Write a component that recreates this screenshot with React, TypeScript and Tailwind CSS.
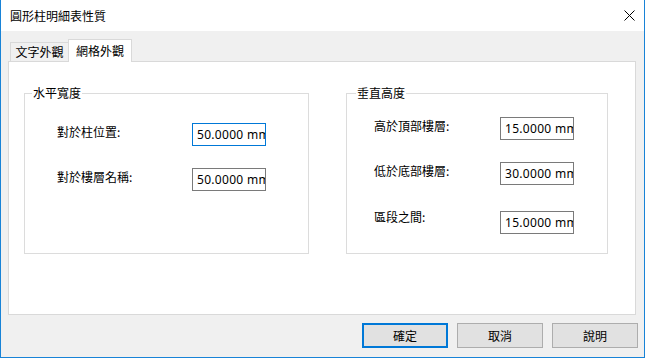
import React from "react";

const cjk = { fontFamily: '"Noto Sans CJK TC", "Noto Sans", sans-serif' };

function Field({ value, focused }: { value: string; focused?: boolean }) {
  return (
    <div
      className={`w-[74px] h-[23px] shrink-0 bg-white border ${
        focused ? "border-[#0078d7]" : "border-[#7a7a7a]"
      } flex items-center pl-[4px] overflow-hidden whitespace-nowrap text-[12px] tracking-[0.3px] text-black`}
      style={{ fontFamily: '"Noto Sans", "Liberation Sans", sans-serif' }}
    >
      <span className="shrink-0">{value}</span>
    </div>
  );
}

function Row({
  label,
  labelW,
  value,
  focused,
  mt,
  lift,
}: {
  label: string;
  labelW: string;
  value: string;
  focused?: boolean;
  mt: string;
  lift: string;
}) {
  return (
    <div className={`flex items-center ${mt}`}>
      <div className={`${labelW} ${lift} shrink-0 text-[12px] leading-[16px] text-black`}>{label}</div>
      <Field value={value} focused={focused} />
    </div>
  );
}

export default function App() {
  return (
    <div
      className="w-[645px] h-[358px] flex flex-col bg-[#f0f0f0] border-x border-b border-[#1883d7] overflow-hidden"
      style={cjk}
    >
      {/* Title bar */}
      <div className="h-[31px] shrink-0 bg-white flex items-center justify-between pl-[9px]">
        <span className="text-[12px] text-black leading-[16px]">圓形柱明細表性質</span>
        <svg width="11" height="11" viewBox="0 0 11 11" className="mr-[9px]">
          <path d="M0.5 0.5 L10.5 10.5 M10.5 0.5 L0.5 10.5" stroke="#000" strokeWidth="1" fill="none" />
        </svg>
      </div>

      {/* Tabs */}
      <div className="mt-[8px] h-[22px] ml-[9px] flex items-end shrink-0">
        <div className="w-[58px] h-[19px] border-l border-t border-[#d9d9d9] bg-[#f0f0f0] flex items-center justify-center text-[12px] text-black leading-[16px]">
          文字外觀
        </div>
        <div className="relative z-10 -mb-px w-[64px] h-[23px] border-l border-t border-r border-[#d9d9d9] bg-white flex items-center justify-center text-[12px] text-black leading-[16px] pb-[1px]">
          網格外觀
        </div>
      </div>

      {/* Panel */}
      <div className="ml-[7px] w-[628px] h-[254px] shrink-0 bg-white border border-[#d9d9d9] flex items-start pl-[15px] pt-[31px]">
        {/* Left group */}
        <div className="w-[285px] h-[161px] border border-[#dcdcdc] flex flex-col">
          <span className="-mt-[9px] ml-[7px] px-[1px] w-fit bg-white text-[12px] leading-[16px] text-black">
            水平寬度
          </span>
          <div className="pl-[32px] flex flex-col">
            <Row label="對於柱位置:" labelW="w-[135px]" value="50.0000 mm" focused mt="mt-[22px]" lift="mb-[5px]" />
            <Row label="對於樓層名稱:" labelW="w-[135px]" value="50.0000 mm" mt="mt-[22px]" lift="mb-[5px]" />
          </div>
        </div>

        {/* Right group */}
        <div className="ml-[37px] w-[262px] h-[161px] border border-[#dcdcdc] flex flex-col">
          <span className="-mt-[9px] ml-[9px] px-[1px] w-fit bg-white text-[12px] leading-[16px] text-black">
            垂直高度
          </span>
          <div className="pl-[27px] flex flex-col">
            <Row label="高於頂部樓層:" labelW="w-[126px]" value="15.0000 mm" mt="mt-[16px]" lift="mb-[5px]" />
            <Row label="低於底部樓層:" labelW="w-[126px]" value="30.0000 mm" mt="mt-[22px]" lift="mb-[5px]" />
            <Row label="區段之間:" labelW="w-[126px]" value="15.0000 mm" mt="mt-[24px]" lift="mb-[11px]" />
          </div>
        </div>
      </div>

      {/* Buttons */}
      <div className="mt-[8px] flex justify-end gap-[9px] pr-[6px] shrink-0">
        <button className="w-[86px] h-[25px] bg-[#e1e1e1] border-2 border-[#0078d7] text-[12px] text-black leading-[16px]">
          確定
        </button>
        <button className="w-[86px] h-[25px] bg-[#e1e1e1] border border-[#adadad] text-[12px] text-black leading-[16px]">
          取消
        </button>
        <button className="w-[86px] h-[25px] bg-[#e1e1e1] border border-[#adadad] text-[12px] text-black leading-[16px]">
          說明
        </button>
      </div>
    </div>
  );
}
